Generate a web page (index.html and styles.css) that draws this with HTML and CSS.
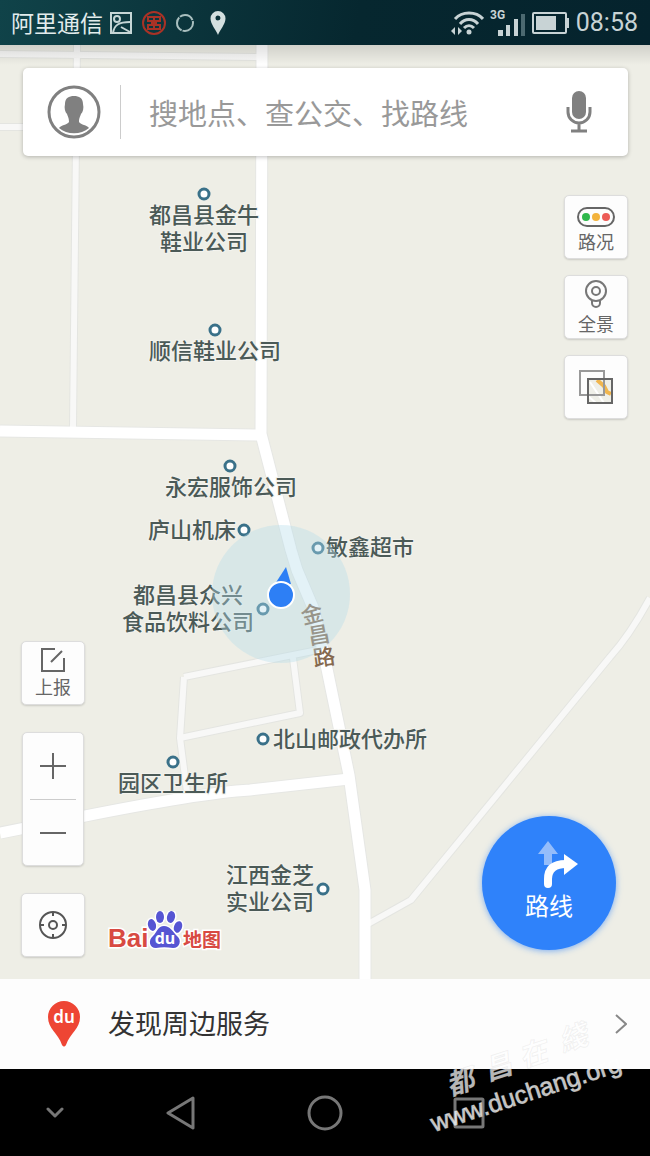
FILE: index.html
```html
<!DOCTYPE html>
<html lang="zh-CN">
<head>
    <meta charset="UTF-8">
    <meta name="viewport" content="width=device-width, initial-scale=1.0">
    <title>百度地图</title>
    <link rel="stylesheet" href="styles.css">
</head>
<body>
    <header class="status-bar">
        <span class="carrier">阿里通信</span>
        <div class="status-icons">
            <svg width="24" height="24" viewBox="0 0 24 24" fill="none" stroke="#c5d6d6" stroke-width="2">
                <rect x="2" y="2" width="20" height="20"/>
                <circle cx="8" cy="8" r="3"/>
                <path d="M4 22C5 14 10 11 21 11M12 16L21 21"/>
            </svg>
            <svg width="24" height="24" viewBox="0 0 24 24" fill="none" stroke="#a93226" stroke-width="2">
                <circle cx="12" cy="12" r="11"/>
                <path d="M6 6h12v4h-4v4h4v4H6v-4h4v-4H6zM12 6v12"/>
            </svg>
            <svg width="20" height="20" viewBox="0 0 20 20" fill="none" stroke="#a9bfbf" stroke-width="2">
                <circle cx="10" cy="10" r="8" stroke-dasharray="15 1"/>
            </svg>
            <svg width="16" height="24" viewBox="0 0 16 24" fill="#d3dfdf">
                <path fill-rule="evenodd" d="M8 0a7.500 7.500 0 0 1 7.500 7.500C15.500 13 10 19 8 24C6 19 .5 13 .5 7.500A7.500 7.500 0 0 1 8 0zM8 4.500a2.500 2.500 0 1 0 0 5a2.500 2.500 0 0 0 0-5z"/>
            </svg>
        </div>
        <div class="status-right">
            <svg width="33" height="24" viewBox="0 0 33 24" fill="none" stroke="#c8d3d5" stroke-width="3">
                <path d="M4 8C11 0 25 0 32 8M9 13C14 7 22 7 27 13M13 17C16 14 20 14 23 17"/>
                <circle cx="18" cy="21" r="2.500" fill="#c8d3d5" stroke="none"/>
                <path d="M4 16v8L0 20zM7 16v8L11 20z" fill="#c8d3d5" stroke="none"/>
            </svg>
            <svg width="36" height="28" viewBox="0 0 36 28" fill="#c8d3d5">
                <text x="0" y="10" class="net">3G</text>
                <path d="M8 21h5v6H8zM16 16h4v11h-4zM24 10h4v17h-4z"/>
                <path d="M31 5h4v22h-4z" fill="#4c6970"/>
            </svg>
            <svg width="38" height="22" viewBox="0 0 38 22" fill="#c8d3d5">
                <rect x="1" y="1" width="33" height="20" rx="1" fill="none" stroke="#c8d3d5" stroke-width="2"/>
                <path d="M4 4h20v14H4zM35 6h2v10h-2z"/>
            </svg>
            <time class="clock">08:58</time>
        </div>
    </header>

    <main class="map">
        <svg class="map-canvas" viewBox="0 45 650 934" preserveAspectRatio="xMidYMid slice">
            <defs>
                <g id="minor">
                    <path d="M77 45L73 428M0 54L257 57M0 127L76 127"/>
                    <path d="M184 677L283 657L318 650M184 677L180 738L187 792M293 658L300 713L180 738"/>
                    <path d="M368 924L411 900L610 657Q630 635 650 598"/>
                </g>
                <g id="major">
                    <path d="M262 45L261 434L291 550L297 570L314 610L327 669L349 775L365 890L365 979"/>
                    <path d="M0 431L262 435M0 833L80 817Q200 793 250 790L349 779"/>
                </g>
            </defs>
            <use href="#minor" class="road minor-edge"/>
            <use href="#major" class="road major-edge"/>
            <use href="#minor" class="road minor"/>
            <use href="#major" class="road major"/>

            <!-- places -->
            <g class="dots">
                <circle cx="204" cy="194" r="5"/>
                <circle cx="215" cy="330" r="5"/>
                <circle cx="230" cy="466" r="5"/>
                <circle cx="244" cy="530" r="5"/>
                <circle cx="318" cy="548" r="5"/>
                <circle cx="263" cy="609" r="5"/>
                <circle cx="263" cy="739" r="5"/>
                <circle cx="173" cy="762" r="5"/>
                <circle cx="323" cy="889" r="5"/>
            </g>
            <g class="places">
                <text x="204" y="223">都昌县金牛</text>
                <text x="204" y="250">鞋业公司</text>
                <text x="215" y="359">顺信鞋业公司</text>
                <text x="231" y="495">永宏服饰公司</text>
                <text x="192" y="538">庐山机床</text>
                <text x="370" y="555">敏鑫超市</text>
                <text x="188" y="603">都昌县众兴</text>
                <text x="188" y="630">食品饮料公司</text>
                <text x="350" y="747">北山邮政代办所</text>
                <text x="173" y="791">园区卫生所</text>
                <text x="270" y="883">江西金芝</text>
                <text x="270" y="910">实业公司</text>
            </g>
            <g class="road-name">
                <text transform="translate(312 614) rotate(-14)" y="8">金</text>
                <text transform="translate(319 635) rotate(-10)" y="8">昌</text>
                <text transform="translate(324 657) rotate(-8)" y="8">路</text>
            </g>

            <!-- my position -->
            <circle cx="281" cy="594" r="69" fill="#b6dcea" fill-opacity=".38"/>
            <path d="M286 567L291 584L275 584z" fill="#2d7ff5"/>
            <circle cx="281" cy="595" r="13" fill="#2d7ff5" stroke="#fff" stroke-width="2"/>
        </svg>

        <div class="map-ui">
            <form class="search">
                <button type="button" class="plain" aria-label="个人中心">
                    <svg width="54" height="54" viewBox="0 0 54 54" fill="#808080">
                        <circle cx="27" cy="27" r="25" fill="none" stroke="#808080" stroke-width="3"/>
                        <path d="M18 19C18 13 22 11 27 11C32 11 36 13 36 19C37 23 36 27 34 29C33 32 32 33 32 37C34 40 40 40 42 43C34 50 20 50 12 43C14 40 20 40 22 37C22 33 21 32 20 29C18 27 17 23 18 19z"/>
                    </svg>
                </button>
                <input type="text" class="search-input" aria-label="搜索" placeholder="搜地点、查公交、找路线">
                <button type="button" class="plain" aria-label="语音搜索">
                    <svg width="26" height="42" viewBox="0 0 26 42" fill="none" stroke="#808080" stroke-width="3">
                        <rect x="6" y="0" width="14" height="28" rx="7" fill="#808080" stroke="none"/>
                        <path d="M2 16v5a11 11 0 0 0 22 0v-5M13 32v8M5 40h16"/>
                    </svg>
                </button>
            </form>

            <div class="tools tools-top">
                <button class="tool tool-traffic">
                    <svg width="38" height="20" viewBox="0 0 38 20">
                        <rect x="1" y="1" width="36" height="18" rx="9" fill="none" stroke="#666" stroke-width="2"/>
                        <circle cx="9" cy="10" r="4" fill="#2fb84c"/>
                        <circle cx="19" cy="10" r="4" fill="#f3b33c"/>
                        <circle cx="29" cy="10" r="4" fill="#ec5b56"/>
                    </svg>
                    路况
                </button>
                <button class="tool">
                    <svg width="24" height="30" viewBox="0 0 24 30" fill="none" stroke="#777" stroke-width="2">
                        <circle cx="12" cy="12" r="10"/>
                        <circle cx="12" cy="12" r="4"/>
                        <path d="M8 22v2a4 4 0 0 0 8 0v-2"/>
                    </svg>
                    全景
                </button>
                <button class="tool" aria-label="图层">
                    <svg width="34" height="34" viewBox="0 0 34 34" fill="none" stroke-width="2">
                        <path d="M9 9h24v24H9z" fill="#efefe8"/>
                        <path d="M11 12l14 21M9 26l8 7" stroke="#fff"/>
                        <path d="M18 10L25 16L28 22L32 24" stroke="#f1b64e" stroke-width="4"/>
                        <rect x="1" y="1" width="24" height="24" stroke="#999"/>
                        <rect x="9" y="9" width="24" height="24" stroke="#666"/>
                    </svg>
                </button>
            </div>

            <div class="map-bottom">
                <div class="tools tools-left">
                    <button class="tool">
                        <svg width="24" height="24" viewBox="0 0 24 24" fill="none" stroke="#666" stroke-width="2">
                            <path d="M14 1H1v22h22V10M10 14L21 3"/>
                        </svg>
                        上报
                    </button>
                    <div class="zoom">
                        <button class="plain" aria-label="放大">
                            <svg width="26" height="26" viewBox="0 0 26 26" stroke="#666" stroke-width="2"><path d="M0 13h26M13 0v26"/></svg>
                        </button>
                        <button class="plain" aria-label="缩小">
                            <svg width="26" height="26" viewBox="0 0 26 26" stroke="#666" stroke-width="2"><path d="M0 13h26"/></svg>
                        </button>
                    </div>
                    <button class="tool" aria-label="定位">
                        <svg width="28" height="28" viewBox="0 0 28 28" fill="none" stroke="#555" stroke-width="2">
                            <circle cx="14" cy="14" r="13"/>
                            <circle cx="14" cy="14" r="4"/>
                            <path d="M14 1v4M14 23v4M1 14h4M23 14h4"/>
                        </svg>
                    </button>
                </div>
                <svg class="logo" width="120" height="46" viewBox="0 0 120 46">
                    <g class="logo-halo">
                        <text x="2" y="36" class="logo-bai">Bai</text>
                        <text x="77" y="36" class="logo-ditu">地图</text>
                    </g>
                    <g fill="#5655d3" stroke="#fff" stroke-width="3" paint-order="stroke">
                        <ellipse cx="46" cy="14" rx="4" ry="6" transform="rotate(-15 46 14)"/>
                        <ellipse cx="54" cy="6" rx="4" ry="6"/>
                        <ellipse cx="65" cy="6" rx="4" ry="6" transform="rotate(12 65 6)"/>
                        <ellipse cx="72" cy="16" rx="4" ry="6" transform="rotate(20 72 16)"/>
                        <path d="M58 15C64 15 67 21 71 25C76 29 74 37 67 37C61 36 55 36 50 37C43 37 42 29 47 25C51 21 52 15 58 15z"/>
                    </g>
                    <text x="59" y="33" class="logo-du">du</text>
                </svg>
                <button class="route">
                    <svg width="40" height="48" viewBox="0 0 40 48">
                        <path d="M10 0L20 13H14V24H6V13H0z" fill="#94bdfb"/>
                        <path d="M10 43V38C10 28 16 23 28 23" fill="none" stroke="#fff" stroke-width="8" stroke-linecap="round"/>
                        <path d="M26 13L40 23L26 34z" fill="#fff"/>
                    </svg>
                    路线
                </button>
            </div>
        </div>
    </main>

    <a href="#" class="nearby">
        <svg width="32" height="46" viewBox="0 0 32 46">
            <path d="M16 0a16 16 0 0 1 16 16C32 28 22 32 18 44Q16 47 14 44C10 32 0 28 0 16A16 16 0 0 1 16 0z" fill="#ee4534"/>
            <text x="16" y="22" class="pin-du">du</text>
        </svg>
        <span class="nearby-text">发现周边服务</span>
        <svg width="12" height="20" viewBox="0 0 12 20" fill="none" stroke="#888" stroke-width="2"><path d="M1 1L11 10L1 19"/></svg>
    </a>

    <nav class="nav-bar">
        <button class="plain" aria-label="收起">
            <svg width="18" height="12" viewBox="0 0 18 12"><path d="M2 2l7 7l7-7"/></svg>
        </button>
        <button class="plain" aria-label="返回">
            <svg width="30" height="34" viewBox="0 0 30 34"><path d="M27 2L2 17L27 32z"/></svg>
        </button>
        <button class="plain" aria-label="主页">
            <svg width="36" height="36" viewBox="0 0 36 36"><circle cx="18" cy="18" r="16"/></svg>
        </button>
        <button class="plain" aria-label="最近任务">
            <svg width="32" height="32" viewBox="0 0 32 32"><rect x="2" y="2" width="28" height="28" rx="1"/></svg>
        </button>
    </nav>

    <svg class="watermark" width="230" height="140" viewBox="0 0 230 140">
        <g class="mark-cn">
            <text transform="translate(40 66) rotate(-18)" y="10">都</text>
            <text transform="translate(78 51) rotate(-18)" y="10">昌</text>
            <text transform="translate(113 38) rotate(-18)" y="10">在</text>
            <text transform="translate(153 22) rotate(-18)" y="10">綫</text>
        </g>
        <text transform="translate(14 116) rotate(-18)" class="mark-url">www.duchang.org</text>
    </svg>
</body>
</html>
```
FILE: styles.css
```css
* {
    box-sizing: border-box;
}
body {
    margin: 0;
    min-height: 100vh;
    display: flex;
    flex-direction: column;
    position: relative;
    background: #000;
    font-family: "Noto Sans CJK SC", "Noto Sans", sans-serif;
    overflow-x: hidden;
}
svg {
    display: block;
    flex-shrink: 0;
}
button {
    font-family: inherit;
    cursor: pointer;
}
.plain {
    display: flex;
    align-items: center;
    justify-content: center;
    padding: 0;
    border: none;
    background: none;
}

/* status bar */
.status-bar {
    display: flex;
    align-items: center;
    height: 45px;
    padding: 0 12px 0 11px;
    background: linear-gradient(100deg, #104349, #06272f 55%, #05232d);
    color: #e2ecec;
}
.carrier {
    font-size: 23px;
    line-height: 45px;
}
.status-icons {
    display: flex;
    align-items: center;
    gap: 9px;
    margin-left: 6px;
}
.status-icons svg:last-child {
    margin-left: 6px;
}
.status-right {
    display: flex;
    align-items: center;
    gap: 6px;
    margin-left: auto;
}
.net {
    font: bold 12px Roboto, sans-serif;
}
.clock {
    font-family: Roboto, sans-serif;
    font-size: 25px;
    color: #c8d3d5;
}

/* map */
.map {
    flex: 1;
    display: flex;
    position: relative;
    background: #eeeee6;
}
.map-canvas {
    position: absolute;
    inset: 0;
    width: 100%;
    height: 100%;
}
.road {
    fill: none;
    stroke-linejoin: round;
}
.minor-edge { stroke: #e4e5e1; stroke-width: 8px; }
.minor { stroke: #f8f8f7; stroke-width: 6px; }
.major-edge { stroke: #e6e7e4; stroke-width: 13px; }
.major { stroke: #fff; stroke-width: 11px; }
.dots {
    fill: #fff;
    stroke: #3a7189;
    stroke-width: 3px;
}
.places {
    font-size: 22px;
    font-weight: 500;
    text-anchor: middle;
    fill: #4b5a57;
    stroke: #f3f3ee;
    stroke-width: 2px;
    paint-order: stroke;
}
.road-name {
    font-size: 22px;
    font-weight: 500;
    text-anchor: middle;
    fill: #86694f;
}
.map-ui {
    flex: 1;
    display: flex;
    flex-direction: column;
    position: relative;
    padding: 23px 22px 22px 21px;
    background: linear-gradient(rgba(0, 0, 0, 0.12), transparent 20px);
}
.search {
    display: flex;
    align-items: center;
    height: 88px;
    margin-left: 2px;
    padding: 0 36px 0 24px;
    background: #fff;
    border-radius: 5px;
    box-shadow: 0 1px 4px rgba(0, 0, 0, 0.25);
}
.search-input {
    flex: 1;
    min-width: 0;
    height: 54px;
    margin-left: 19px;
    padding: 0 0 0 28px;
    border: none;
    border-left: 1px solid #ccc;
    outline: none;
    background: none;
    font-family: inherit;
    font-size: 29px;
    color: #333;
}
.search-input::placeholder {
    color: #999;
}
.tools {
    display: flex;
    flex-direction: column;
    align-items: center;
}
.tools-top {
    align-self: flex-end;
    gap: 16px;
    margin-top: 39px;
}
.tools-left {
    gap: 27px;
}
.tool {
    display: flex;
    flex-direction: column;
    align-items: center;
    justify-content: center;
    gap: 2px;
    width: 64px;
    height: 64px;
    padding: 0;
    border: 1px solid #ddd;
    border-radius: 5px;
    background: #fdfdfd;
    box-shadow: 0 1px 2px rgba(0, 0, 0, 0.15);
    font-size: 18px;
    line-height: 24px;
    color: #666;
}
.tool-traffic {
    padding-top: 6px;
}
.zoom {
    display: flex;
    flex-direction: column;
    width: 62px;
    padding: 0 7px;
    border: 1px solid #ddd;
    border-radius: 5px;
    background: #fdfdfd;
    box-shadow: 0 1px 2px rgba(0, 0, 0, 0.15);
}
.zoom .plain {
    height: 66px;
}
.zoom .plain + .plain {
    border-top: 1px solid #ccc;
}
.map-bottom {
    display: flex;
    align-items: flex-end;
    margin-top: auto;
}
.logo {
    margin-left: 21px;
}
.logo-halo {
    fill: #d84a42;
    stroke: #fff;
    stroke-width: 3px;
    paint-order: stroke;
}
.logo-bai {
    font: bold 26px "Liberation Sans", sans-serif;
}
.logo-ditu {
    font-size: 19px;
    font-weight: bold;
}
.logo-du {
    font: bold 16px "Open Sans", sans-serif;
    text-anchor: middle;
    fill: #fff;
}
.route {
    display: flex;
    flex-direction: column;
    align-items: center;
    justify-content: center;
    width: 134px;
    height: 134px;
    margin: 0 12px 7px auto;
    padding: 0 0 4px;
    border: none;
    border-radius: 50%;
    background: #2f82fa;
    box-shadow: 0 1px 6px rgba(47, 130, 250, 0.6);
    font-size: 24px;
    line-height: 32px;
    color: #fff;
}
.route svg {
    margin-left: 18px;
}

/* bottom panel */
.nearby {
    display: flex;
    align-items: center;
    height: 90px;
    padding: 0 23px 0 48px;
    background: #fdfdfd;
    color: #333;
    text-decoration: none;
}
.nearby-text {
    flex: 1;
    margin-left: 28px;
    padding-bottom: 4px;
    font-size: 27px;
}
.pin-du {
    font: 600 17px "Noto Sans", sans-serif;
    text-anchor: middle;
    fill: #fff;
}

.nav-bar {
    display: grid;
    grid-template-columns: 109fr 144fr 144fr 144fr 109fr;
    height: 87px;
    background: #000;
}
.nav-bar svg {
    fill: none;
    stroke: #777;
    stroke-width: 3px;
    stroke-linejoin: round;
    stroke-linecap: round;
}

.watermark {
    position: absolute;
    right: 0;
    bottom: 0;
    pointer-events: none;
    fill: #fff;
    fill-opacity: 0.72;
}
.mark-cn {
    font-size: 28px;
    font-weight: bold;
    font-style: italic;
    text-anchor: middle;
    stroke: #999;
    stroke-opacity: 0.12;
}
.mark-url {
    font: 25px "Liberation Sans", Arial, sans-serif;
    stroke: #fff;
    stroke-opacity: 0.5;
}
```
